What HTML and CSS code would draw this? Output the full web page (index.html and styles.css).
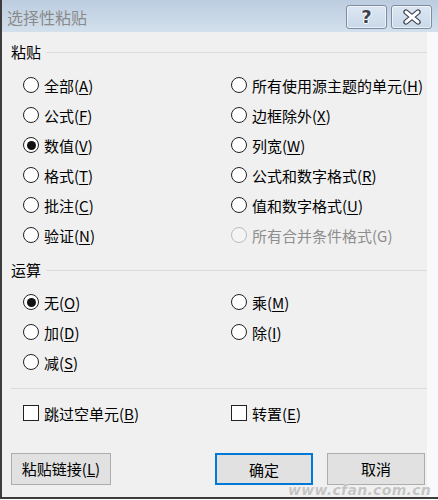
FILE: index.html
```html
<!DOCTYPE html>
<html lang="zh-CN">
<head>
  <meta charset="UTF-8">
  <title>选择性粘贴</title>
  <link rel="stylesheet" href="styles.css">
</head>
<body>
  <div class="window">
    <div class="titlebar">
      <span class="title">选择性粘贴</span>
      <div class="tb-buttons">
        <div class="tb-btn help"><span class="qmark">?</span></div>
        <div class="tb-btn close">
          <svg width="24" height="16" viewBox="0 0 24 16">
            <path d="M6 3 L18 13 M18 3 L6 13" stroke="#3a4250" stroke-width="5.4" stroke-linecap="round" fill="none"/>
            <path d="M6 3 L18 13 M18 3 L6 13" stroke="#fff" stroke-width="3" stroke-linecap="round" fill="none"/>
          </svg>
        </div>
      </div>
    </div>

    <div class="frame">
      <div class="panel">
        <div class="group-head"><span>粘贴</span><div class="rule"></div></div>
        <div class="grid paste">
          <label class="opt"><span class="radio"></span>全部(<u>A</u>)</label>
          <label class="opt"><span class="radio"></span>所有使用源主题的单元(<u>H</u>)</label>
          <label class="opt"><span class="radio"></span>公式(<u>F</u>)</label>
          <label class="opt"><span class="radio"></span>边框除外(<u>X</u>)</label>
          <label class="opt"><span class="radio on"></span>数值(<u>V</u>)</label>
          <label class="opt"><span class="radio"></span>列宽(<u>W</u>)</label>
          <label class="opt"><span class="radio"></span>格式(<u>T</u>)</label>
          <label class="opt"><span class="radio"></span>公式和数字格式(<u>R</u>)</label>
          <label class="opt"><span class="radio"></span>批注(<u>C</u>)</label>
          <label class="opt"><span class="radio"></span>值和数字格式(<u>U</u>)</label>
          <label class="opt"><span class="radio"></span>验证(<u>N</u>)</label>
          <label class="opt disabled"><span class="radio"></span>所有合并条件格式(G)</label>
        </div>

        <div class="group-head ops-head"><span>运算</span><div class="rule"></div></div>
        <div class="grid ops">
          <label class="opt"><span class="radio on"></span>无(<u>O</u>)</label>
          <label class="opt"><span class="radio"></span>乘(<u>M</u>)</label>
          <label class="opt"><span class="radio"></span>加(<u>D</u>)</label>
          <label class="opt"><span class="radio"></span>除(<u>I</u>)</label>
          <label class="opt"><span class="radio"></span>减(<u>S</u>)</label>
        </div>

        <div class="separator"></div>

        <div class="grid checks">
          <label class="opt"><span class="check"></span>跳过空单元(<u>B</u>)</label>
          <label class="opt"><span class="check"></span>转置(<u>E</u>)</label>
        </div>

        <div class="actions">
          <button class="btn link">粘贴链接(<u>L</u>)</button>
          <div class="right-btns">
            <button class="btn default">确定</button>
            <button class="btn">取消</button>
          </div>
        </div>

        <span class="watermark">www.cfan.com.cn</span>
      </div>
    </div>
  </div>
</body>
</html>
```

FILE: styles.css
```css
* {
  box-sizing: border-box;
}

html, body {
  margin: 0;
  padding: 0;
  background: #fff;
}

body {
  font-family: "Noto Sans CJK SC", "Noto Sans", sans-serif;
  font-size: 15px;
  color: #000;
}

.window {
  width: 438px;
  height: 499px;
  display: flex;
  flex-direction: column;
  border-left: 2px solid #3c3c3c;
  border-bottom: 2px solid #3c3c3c;
  background: linear-gradient(to right, #e8edf3, #f8f9fb);
}

.titlebar {
  height: 32px;
  display: flex;
  align-items: flex-start;
  justify-content: space-between;
  background: linear-gradient(to bottom, #bccde0, #d3e0ec);
  padding-left: 5px;
}

.title {
  color: #8a8a8a;
  font-size: 16px;
  line-height: 34px;
}

.tb-buttons {
  display: flex;
  gap: 4px;
  padding-top: 5px;
  padding-right: 6px;
}

.tb-btn {
  width: 41px;
  height: 24px;
  border: 1px solid #7d8ca2;
  border-radius: 3px;
  background: linear-gradient(to bottom, #dde7f2, #c9d8e8);
  box-shadow: inset 0 0 0 1px rgba(255, 255, 255, 0.6);
  display: flex;
  align-items: center;
  justify-content: center;
}

.qmark {
  font-family: "DejaVu Sans", sans-serif;
  font-weight: bold;
  font-size: 18px;
  line-height: 20px;
  color: #3a4250;
  text-shadow: 0 0 1px #fff, 1px 0 0 #fff, -1px 0 0 #fff, 0 1px 0 #fff;
}

.frame {
  flex: 1;
  display: flex;
  padding-right: 11px;
}

.panel {
  position: relative;
  flex: 1;
  background: #f0f0f0;
  padding: 10px 0 0 9px;
}

.group-head {
  display: flex;
  align-items: center;
  height: 20px;
  line-height: 20px;
}

.group-head .rule {
  flex: 1;
  height: 1px;
  margin-left: 5px;
  background: #dcdcdc;
}

.grid {
  display: grid;
  grid-template-columns: 208px 1fr;
  padding-left: 12px;
}

.paste {
  margin-top: 8px;
}

.ops-head {
  margin-top: 10px;
}

.ops {
  margin-top: 7px;
}

.opt {
  height: 30px;
  display: flex;
  align-items: center;
  white-space: nowrap;
}

.opt u {
  text-underline-offset: 2px;
}

.radio {
  width: 16px;
  height: 16px;
  border: 1.4px solid #222;
  border-radius: 50%;
  background: #fff;
  margin-right: 5px;
  display: flex;
  align-items: center;
  justify-content: center;
}

.radio.on::after {
  content: "";
  width: 9px;
  height: 9px;
  border-radius: 50%;
  background: #111;
}

.disabled {
  color: #8d8d8d;
}

.disabled .radio {
  border-color: #bcbcbc;
  background: #f4f4f4;
}

.check {
  width: 16px;
  height: 16px;
  border: 1.4px solid #222;
  background: #fff;
  margin-right: 5px;
}

.separator {
  height: 1px;
  background: #dcdcdc;
  margin-top: 11px;
}

.checks {
  margin-top: 9px;
}

.actions {
  display: flex;
  justify-content: space-between;
  margin-top: 25px;
  padding-right: 2px;
}

.right-btns {
  display: flex;
  gap: 14px;
}

.btn {
  font-family: inherit;
  font-size: 15px;
  color: #000;
  height: 32px;
  width: 98px;
  background: #e1e1e1;
  border: 1px solid #adadad;
  padding: 0;
  line-height: 30px;
}

.btn.link {
  width: 100px;
}

.btn.default {
  border: 2px solid #0078d7;
}

.watermark {
  position: absolute;
  right: -4px;
  bottom: 0;
  font-family: "DejaVu Sans", sans-serif;
  font-weight: bold;
  font-style: italic;
  font-size: 14px;
  line-height: 14px;
  letter-spacing: 0.3px;
  color: #c4c4c4;
  text-shadow: 0 0 1px #fff;
}
```
